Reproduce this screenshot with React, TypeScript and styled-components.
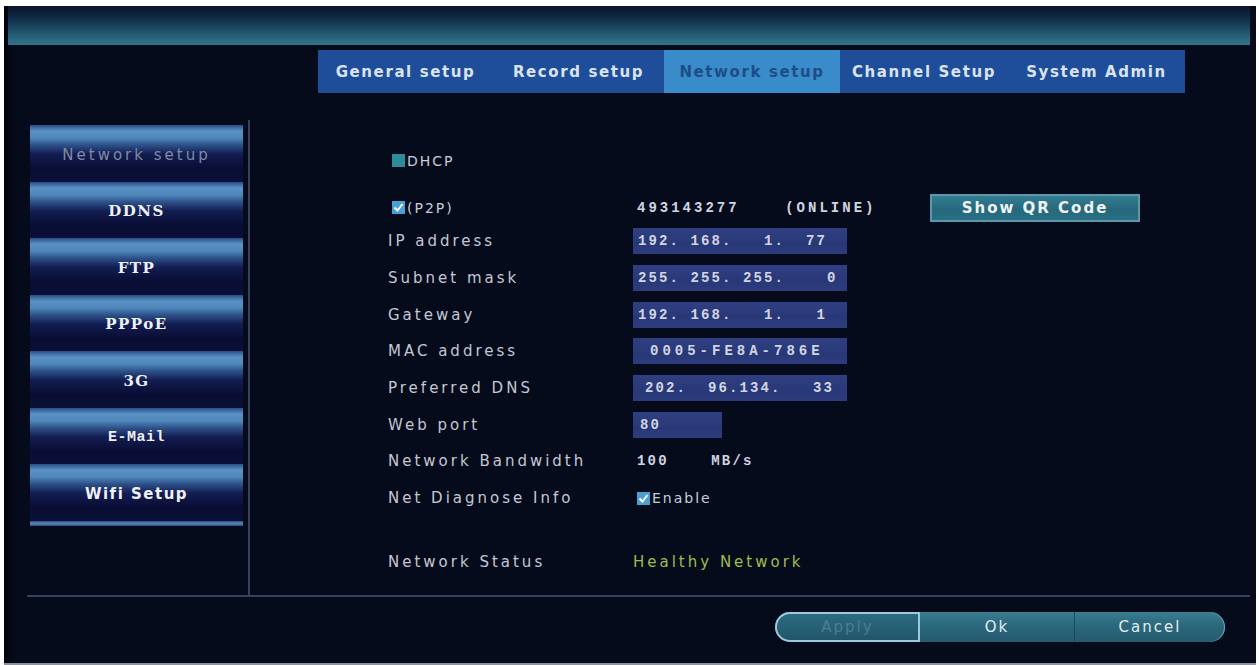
import React from "react";
import styled, { createGlobalStyle } from "styled-components";

type Face = "sans" | "serif" | "mono";

interface SideItem {
  label: string;
  face: Face;
}

interface Field {
  label: string;
  value: string;
  width: number;
  pad: number;
  spacing?: number;
}

const faces: Record<Face, string> = {
  sans: `"DejaVu Sans", Verdana, sans-serif`,
  serif: `"DejaVu Serif", "Liberation Serif", serif`,
  mono: `"Liberation Mono", "Courier New", monospace`,
};

const tabs = [
  { label: "General setup", width: 175 },
  { label: "Record setup", width: 171 },
  { label: "Network setup", width: 176, active: true },
  { label: "Channel Setup", width: 168 },
  { label: "System Admin", width: 177 },
];

const sideItems: SideItem[] = [
  { label: "Network setup", face: "sans" },
  { label: "DDNS", face: "serif" },
  { label: "FTP", face: "serif" },
  { label: "PPPoE", face: "serif" },
  { label: "3G", face: "serif" },
  { label: "E-Mail", face: "mono" },
  { label: "Wifi Setup", face: "sans" },
];

const fields: Field[] = [
  { label: "IP address", value: "192. 168.   1.  77", width: 214, pad: 5 },
  { label: "Subnet mask", value: "255. 255. 255.    0", width: 214, pad: 5 },
  { label: "Gateway", value: "192. 168.   1.   1", width: 214, pad: 5 },
  { label: "MAC address", value: "0005-FE8A-786E", width: 214, pad: 17, spacing: 4 },
  { label: "Preferred DNS", value: "202.  96.134.   33", width: 214, pad: 12 },
  { label: "Web port", value: "80", width: 89, pad: 7 },
];

const GlobalStyle = createGlobalStyle`
  html, body {
    margin: 0;
    padding: 0;
    background: #ffffff;
  }
  body {
    font-family: "DejaVu Sans", Verdana, sans-serif;
  }
`;

const Screen = styled.div`
  box-sizing: border-box;
  margin: 6px 3px 0 4px;
  width: 1252px;
  height: 659px;
  background: #060b1b;
  border-bottom: 2px solid #8c929e;
  box-shadow: inset 7px 0 5px -3px #010308;
  display: flex;
  flex-direction: column;
  overflow: hidden;
`;

const TopBar = styled.div`
  height: 39px;
  margin: 0 6px 0 4px;
  background: linear-gradient(
    to bottom,
    #0a152b 0%,
    #0f2640 25%,
    #1c4a63 58%,
    #2b687f 85%,
    #357288 100%
  );
`;

const TabBar = styled.nav`
  display: flex;
  width: 867px;
  height: 43px;
  margin: 5px 0 0 314px;
  background: #1e4e9a;
`;

const Tab = styled.div<{ $width: number; $active?: boolean }>`
  display: flex;
  align-items: center;
  justify-content: center;
  width: ${(p) => p.$width}px;
  background: ${(p) => (p.$active ? "#3a8bc9" : "transparent")};
  color: ${(p) => (p.$active ? "#1d4d88" : "#dbe3f1")};
  font-size: 15px;
  font-weight: bold;
  letter-spacing: 1.6px;
  white-space: nowrap;
`;

const Body = styled.div`
  display: flex;
  height: 475px;
  margin: 27px 6px 0 23px;
  border-bottom: 2px solid #38425c;
`;

const Sidebar = styled.aside`
  box-sizing: border-box;
  width: 221px;
  padding: 5px 5px 0 3px;
`;

const NavItem = styled.div<{ $face: Face; $active?: boolean }>`
  display: flex;
  align-items: center;
  justify-content: center;
  height: 56.5px;
  padding-top: 3px;
  box-sizing: border-box;
  background: linear-gradient(
    to bottom,
    #2a4f85 0px,
    #5b91c4 6px,
    #4f87bb 13px,
    #2d5189 20px,
    #131d52 29px,
    #090d33 44px,
    #0b1039 100%
  );
  color: ${(p) => (p.$active ? "#7f8aa5" : "#eef1f7")};
  font-family: ${(p) => faces[p.$face]};
  font-size: 15px;
  font-weight: ${(p) => (p.$active ? "normal" : "bold")};
  letter-spacing: ${(p) => (p.$active ? "3px" : p.$face === "mono" ? "0.5px" : "1.5px")};
  white-space: nowrap;
`;

const NavEnd = styled.div`
  height: 5px;
  background: linear-gradient(to bottom, #2c4f80, #5786b6, #2c4f80);
`;

const Content = styled.section`
  flex: 1;
  border-left: 2px solid #38425c;
  padding: 22px 0 0 138px;
`;

const Row = styled.div<{ $gap?: number; $height?: number }>`
  display: grid;
  grid-template-columns: 245px 297px auto;
  align-items: center;
  height: ${(p) => p.$height ?? 36.7}px;
  margin-top: ${(p) => p.$gap || 0}px;
`;

const Label = styled.span<{ $color?: string }>`
  color: ${(p) => p.$color || "#c3c8d4"};
  font-size: 15px;
  letter-spacing: 3px;
  white-space: nowrap;
`;

const CheckLabel = styled.label`
  display: flex;
  align-items: center;
  gap: 2px;
  margin-left: 4px;
  color: #c8cdd8;
  font-size: 14px;
  letter-spacing: 2px;
`;

const Box = styled.span<{ $checked?: boolean }>`
  display: inline-flex;
  align-items: center;
  justify-content: center;
  width: 13px;
  height: 13px;
  background: ${(p) => (p.$checked ? "#4a9fd5" : "#2e8c98")};
`;

const Value = styled.span<{ $spacing: number }>`
  padding-left: 4px;
  color: #d0d5e0;
  font-family: ${faces.mono};
  font-size: 14px;
  font-weight: bold;
  letter-spacing: ${(p) => p.$spacing}px;
  white-space: pre;
`;

const Input = styled.div<{ $width: number; $pad: number; $spacing?: number }>`
  display: flex;
  align-items: center;
  box-sizing: border-box;
  width: ${(p) => p.$width}px;
  height: 26px;
  padding-left: ${(p) => p.$pad}px;
  background: linear-gradient(to bottom, #2f3f82, #283877 60%, #2c3c7e);
  color: #d2d6e3;
  font-family: ${faces.mono};
  font-size: 14px;
  font-weight: bold;
  letter-spacing: ${(p) => p.$spacing ?? 2.1}px;
  white-space: pre;
`;

const QrButton = styled.button`
  width: 210px;
  height: 28px;
  padding: 0;
  border: 2px solid #5b98ac;
  background: linear-gradient(to bottom, #337d90, #27687c 55%, #2a6f84);
  color: #eef3f6;
  font-family: ${faces.sans};
  font-size: 15px;
  font-weight: bold;
  letter-spacing: 2px;
`;

const Footer = styled.footer`
  display: flex;
  justify-content: flex-end;
  align-items: flex-start;
  flex: 1;
  padding: 15px 31px 0 0;
`;

const ButtonGroup = styled.div`
  display: flex;
  height: 30px;
  border-radius: 15px;
  background: linear-gradient(to bottom, #3a7d91, #2b687c 45%, #245b6f);
  box-shadow: inset -1px 0 0 #6ea3b5;
`;

const ActionButton = styled.button<{ $width: number; $selected?: boolean; $edge?: "left" | "right" }>`
  box-sizing: border-box;
  width: ${(p) => p.$width}px;
  height: 30px;
  padding: 0;
  border: ${(p) => (p.$selected ? "2px solid #9ccad8" : "none")};
  border-right: ${(p) => (p.$selected ? "2px solid #9ccad8" : p.$edge === "right" ? "none" : "1px solid #1d4a5b")};
  border-radius: ${(p) =>
    p.$edge === "left" ? "15px 0 0 15px" : p.$edge === "right" ? "0 15px 15px 0" : "0"};
  background: ${(p) => (p.$selected ? "linear-gradient(to bottom, #2c6b80, #215669)" : "transparent")};
  color: ${(p) => (p.$selected ? "#4e7c91" : "#e4edf1")};
  font-family: ${faces.sans};
  font-size: 15px;
  letter-spacing: 2px;
`;

const Tick = () => (
  <svg width="11" height="11" viewBox="0 0 11 11">
    <polyline points="1.5,5.5 4.5,8.5 9.5,2" fill="none" stroke="#ffffff" strokeWidth="2" />
  </svg>
);

const Check: React.FC<{ checked?: boolean; label: string }> = ({ checked, label }) => (
  <CheckLabel>
    <Box $checked={checked}>{checked && <Tick />}</Box>
    {label}
  </CheckLabel>
);

export default function App() {
  return (
    <>
      <GlobalStyle />
      <Screen>
        <TopBar />
        <TabBar>
          {tabs.map((t) => (
            <Tab key={t.label} $width={t.width} $active={t.active}>
              {t.label}
            </Tab>
          ))}
        </TabBar>

        <Body>
          <Sidebar>
            {sideItems.map((item, i) => (
              <NavItem key={item.label} $face={item.face} $active={i === 0}>
                {item.label}
              </NavItem>
            ))}
            <NavEnd />
          </Sidebar>

          <Content>
            <Row $height={37}>
              <Check label="DHCP" />
            </Row>
            <Row $gap={13} $height={31}>
              <Check checked label="(P2P)" />
              <Value $spacing={3}>{"493143277    (ONLINE)"}</Value>
              <QrButton>Show QR Code</QrButton>
            </Row>
            {fields.map((f) => (
              <Row key={f.label}>
                <Label>{f.label}</Label>
                <Input $width={f.width} $pad={f.pad} $spacing={f.spacing}>
                  {f.value}
                </Input>
              </Row>
            ))}
            <Row>
              <Label>Network Bandwidth</Label>
              <Value $spacing={2.2}>{"100    MB/s"}</Value>
            </Row>
            <Row>
              <Label>Net Diagnose Info</Label>
              <Check checked label="Enable" />
            </Row>
            <Row $gap={27}>
              <Label>Network Status</Label>
              <Label $color="#9dbd4c">Healthy Network</Label>
            </Row>
          </Content>
        </Body>

        <Footer>
          <ButtonGroup>
            <ActionButton $width={145} $selected $edge="left">
              Apply
            </ActionButton>
            <ActionButton $width={155}>Ok</ActionButton>
            <ActionButton $width={150} $edge="right">
              Cancel
            </ActionButton>
          </ButtonGroup>
        </Footer>
      </Screen>
    </>
  );
}
